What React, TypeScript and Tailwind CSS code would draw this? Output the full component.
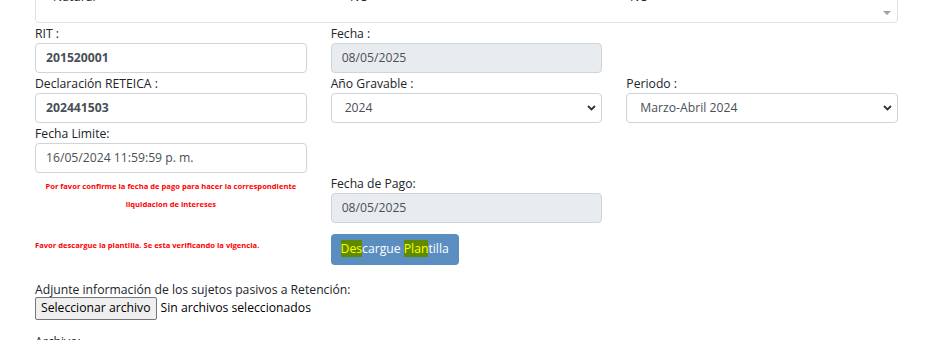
import React from "react";

const FONT = "font-['Segoe_UI','Open_Sans',sans-serif]";
const LABEL_CLS = "block h-[18px] text-[12.2px] leading-[18px] text-[#212529]";
const INPUT_CLS =
  "flex h-[30px] w-full items-center rounded-[4px] border border-[#ced4da] bg-white px-[10px] text-[12.2px] text-[#495057]";
const DISABLED_CLS =
  "flex h-[30px] w-full items-center rounded-[4px] border border-[#ced4da] bg-[#e9ecef] px-[10px] text-[12.2px] text-[#495057]";
const SELECT_CLS =
  "flex h-[30px] w-full items-center rounded-[4px] border border-[#ced4da] bg-white pl-[13px] pr-[5px] text-[12.2px] text-[#495057]";

function Chevron() {
  return (
    <svg width="9" height="6" viewBox="0 0 9 6" className="ml-auto">
      <path d="M1 1 L4.5 4.5 L8 1" fill="none" stroke="#333" strokeWidth="1.8" />
    </svg>
  );
}

function Field({ label, children }: { label: string; children: React.ReactNode }) {
  return (
    <div>
      <label className={LABEL_CLS}>{label}</label>
      {children}
    </div>
  );
}

function Hl({ children }: { children: React.ReactNode }) {
  return <span className="bg-[#5f8a00] text-[#ffff00]">{children}</span>;
}

export default function App() {
  return (
    <div className={`${FONT} h-[340px] w-[952px] overflow-hidden bg-white`}>
      <div className="ml-[35px] w-[863px]">
        {/* cut-off table box */}
        <div className="-mt-[20px] relative h-[43px] rounded-b-[4px] border border-[#dee2e6] text-[12.2px] text-[#212529]">
          <div className="grid grid-cols-[297px_280px_1fr] pl-[17px] pt-[6px] leading-[19px]">
            <span>Natural</span>
            <span>NO</span>
            <span>NO</span>
          </div>
          <div className="absolute right-[6px] top-[30px] h-0 w-0 border-x-[4px] border-t-[4px] border-x-transparent border-t-[#a0a0a0]" />
        </div>

        <div className="mt-[2px] grid grid-cols-3 gap-x-[24px] gap-y-[2px]">
          <Field label="RIT :">
            <div className={`${INPUT_CLS} font-bold text-[#343a40]`}>201520001</div>
          </Field>
          <Field label="Fecha :">
            <div className={DISABLED_CLS}>08/05/2025</div>
          </Field>
          <div />

          <Field label="Declaración RETEICA :">
            <div className={`${INPUT_CLS} font-bold text-[#343a40]`}>202441503</div>
          </Field>
          <Field label="Año Gravable :">
            <div className={SELECT_CLS}>
              2024
              <Chevron />
            </div>
          </Field>
          <Field label="Periodo :">
            <div className={SELECT_CLS}>
              Marzo-Abril 2024
              <Chevron />
            </div>
          </Field>

          <div>
            <Field label="Fecha Limite:">
              <div className={INPUT_CLS}>16/05/2024 11:59:59 p. m.</div>
            </Field>
            <p className="mt-[4px] text-center text-[7.6px] font-bold leading-[18px] text-[#ff0000]">
              Por favor confirme la fecha de pago para hacer la correspondiente
              <br />
              liquidacion de intereses
            </p>
          </div>
          <div className="pt-[50px]">
            <Field label="Fecha de Pago:">
              <div className={DISABLED_CLS}>08/05/2025</div>
            </Field>
          </div>
          <div />

          <div className="pt-[15px]">
            <span className="block text-[7.6px] font-bold leading-[11px] text-[#ff0000]">
              Favor descargue la plantilla. Se esta verificando la vigencia.
            </span>
          </div>
          <div className="pt-[9px]">
            <button className="h-[31px] w-[128px] rounded-[4px] bg-[#5a8dc0] text-[12.2px] text-white">
              <Hl>Des</Hl>cargue <Hl>Plan</Hl>tilla
            </button>
          </div>
          <div />
        </div>

        <div className="mt-[17px]">
          <label className="block text-[12.2px] leading-[15px] text-[#212529]">
            Adjunte información de los sujetos pasivos a Retención:
          </label>
          <div className="flex items-center gap-[4px] text-[12.2px] text-black">
            <button className="h-[23px] rounded-[2px] border border-[#767676] bg-[#efefef] px-[5px]">
              Seleccionar archivo
            </button>
            <span>Sin archivos seleccionados</span>
          </div>
          <label className="mt-[13px] block text-[12.2px] text-[#212529]">Archivo:</label>
        </div>
      </div>
    </div>
  );
}
